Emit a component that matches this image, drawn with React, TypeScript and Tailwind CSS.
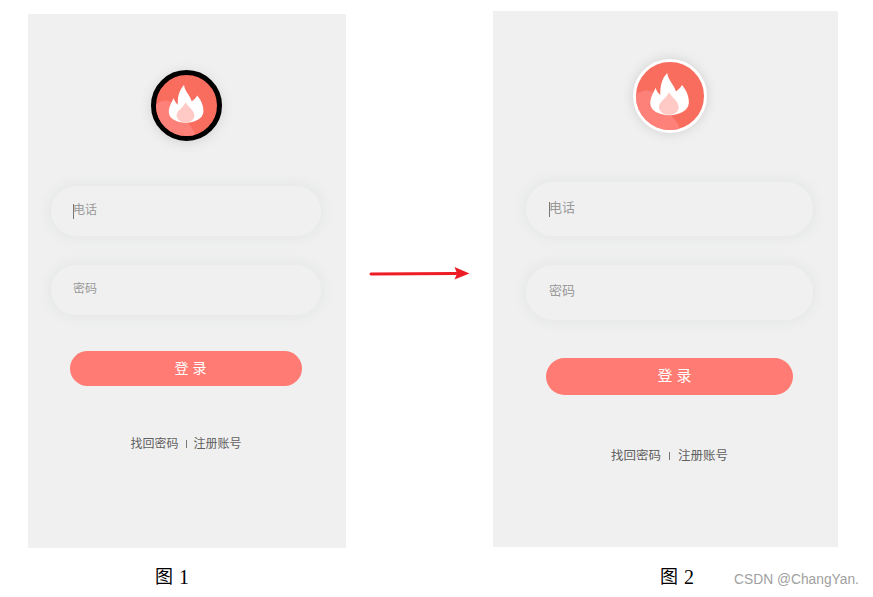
import React from "react";

const cjk = "font-['Liberation_Sans','Noto_Sans_CJK_SC',sans-serif]";

// flame badge, same drawing for both panels
function FlameLogo({ className }: { className: string }) {
  return (
    <div className={`shrink-0 rounded-full bg-[#f96d5f] ${className}`}>
      <svg viewBox="0 0 74 74" className="h-full w-full rounded-full blur-[0.6px]">
        <path d="M0 36C8 28 18 30 24 38L46 68L48 74H0Z" fill="#fd8179" />
        <path
          d="M34 12C35 20 41 24 43.5 32C46 30 48.5 28 50 25C55 31 58 38 57.5 45C57 53 47 58 36.5 58C25 58 15.5 53 15.5 45C15.5 39 19 33 21.5 28C22 31 24 34 26.5 36C26 27 28 18 34 12Z"
          fill="#ffffff"
        />
        <path d="M36 33C39 39 46.5 43 46.5 49C46.5 54 42 57.5 36 57.5C30 57.5 25 54 25 49C25 43 33 40 36 33Z" fill="#ffc9c6" />
      </svg>
    </div>
  );
}

function Field({ label, caret, className, textClass }: { label: string; caret?: boolean; className: string; textClass: string }) {
  return (
    <div className={`flex shrink-0 items-center rounded-full bg-[#f0f0f0] text-[#999999] shadow-[0_0_10px_5px_#e8e9e9] ${className}`}>
      {caret && <span className="-mr-px h-[15px] w-px bg-[#777777]" />}
      <span className={textClass}>{label}</span>
    </div>
  );
}

function Links({ className }: { className: string }) {
  return (
    <div className={`flex items-center text-[#606060] ${className}`}>
      <span>找回密码</span>
      <span className="h-[8px] w-px bg-[#777777]" />
      <span>注册账号</span>
    </div>
  );
}

export default function App() {
  return (
    <div className={`flex h-[597px] w-[873px] overflow-hidden bg-white ${cjk}`}>
      {/* figure 1 */}
      <div className="ml-[28px] mt-[14px] flex w-[318px] shrink-0 flex-col">
        <div className="flex h-[534px] flex-col items-center bg-[#f0f0f0] pr-[2px] pt-[56px]">
          <FlameLogo className="h-[71px] w-[71px] border-[5px] border-black shadow-[0_2px_12px_#d4d4d4]" />
          <Field label="电话" caret textClass="-mt-[2px]" className="mt-[45px] h-[50px] w-[270px] pl-[22px] text-[12px]" />
          <Field label="密码" textClass="-mt-[2px]" className="mt-[29px] h-[50px] w-[270px] pl-[22px] text-[12px]" />
          <button className="mt-[36px] h-[35px] w-[232px] rounded-full bg-[#ff7b73] pl-[9px] text-[14px] text-white">登 录</button>
          <Links className="mt-[49px] h-[18px] gap-[7px] text-[12px]" />
        </div>
        <div className="mt-[17px] flex items-center justify-center gap-[6px] pr-[30px] text-[20px] leading-[24px] text-black">
          <span className="text-[18px]">图</span>
          <span className="font-['Liberation_Serif',serif]">1</span>
        </div>
      </div>

      {/* arrow between the two figures */}
      <div className="flex w-[147px] shrink-0 justify-center pt-[263px]">
        <svg width="104" height="20" viewBox="0 0 104 20">
          <path d="M3 11L88 10.5" stroke="#ed1c24" strokeWidth="3" strokeLinecap="round" fill="none" />
          <path d="M86.5 4L101.5 10.5L86.5 16.5L89 10.5Z" fill="#ed1c24" />
        </svg>
      </div>

      {/* figure 2 */}
      <div className="mt-[11px] flex w-[345px] shrink-0 flex-col">
        <div className="flex h-[536px] flex-col items-center bg-[#f0f0f0] pl-[8px] pt-[48px]">
          <FlameLogo className="h-[74px] w-[74px] border-[3px] border-white shadow-[0_0_12px_#d0d0d0]" />
          <Field label="电话" caret textClass="-mt-[3px]" className="mt-[49px] h-[54px] w-[287px] pl-[23px] text-[13px]" />
          <Field label="密码" textClass="-mt-[4px]" className="mt-[29px] h-[55px] w-[287px] pl-[23px] text-[13px]" />
          <button className="mt-[38px] h-[37px] w-[247px] rounded-full bg-[#ff7b73] pl-[10px] text-[15px] text-white">登 录</button>
          <Links className="mt-[52px] h-[18px] gap-[8px] text-[12.5px]" />
        </div>
        <div className="mt-[18px] flex items-center text-[20px] leading-[24px] text-black">
          <span className="ml-[167px] text-[18px]">图</span>
          <span className="ml-[6px] font-['Liberation_Serif',serif]">2</span>
          <span className="ml-[40px] mt-[6px] whitespace-nowrap text-[13.8px] leading-[16px] text-[#a0a0a0]">CSDN @ChangYan.</span>
        </div>
      </div>
    </div>
  );
}
